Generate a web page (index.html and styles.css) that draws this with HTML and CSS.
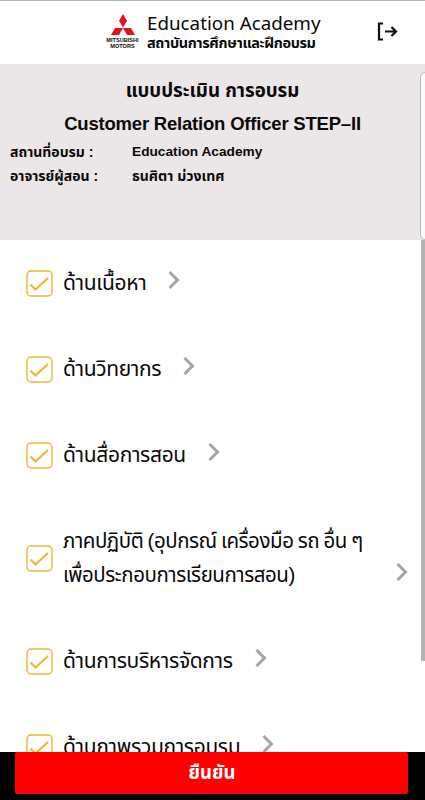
FILE: index.html
```
<!DOCTYPE html>
<html lang="th">
<head>
    <meta charset="UTF-8">
    <meta name="viewport" content="width=device-width, initial-scale=1.0">
    <title>แบบประเมิน การอบรม</title>
    <link rel="stylesheet" href="styles.css">
</head>
<body>
    <header class="topbar">
        <div class="brand">
            <div class="logo">
                <svg class="logo-mark" width="24" height="21" viewBox="0 0 24 21" fill="#e1141e">
                    <path d="M12 0l4 6.8-4 6.8-4-6.8z"/>
                    <path d="M12 14H4l-4 6.900h8z"/>
                    <path d="M12 14h8l4 6.900h-8z"/>
                </svg>
                <span>MITSUBISHI</span>
                <span>MOTORS</span>
            </div>
            <div class="brand-text">
                <div class="brand-en">Education Academy</div>
                <div class="brand-th">สถาบันการศึกษาและฝึกอบรม</div>
            </div>
        </div>
        <svg class="logout" width="21" height="19" viewBox="0 0 21 19" fill="none" stroke="#111" stroke-width="2.2">
            <path d="M6 1.500H2v16h4"/>
            <path d="M8 9.500h11M14.500 5l4.500 4.500-4.500 4.500"/>
        </svg>
    </header>

    <section class="info">
        <h1>แบบประเมิน การอบรม</h1>
        <h2>Customer Relation Officer STEP–II</h2>
        <dl>
            <dt>สถานที่อบรม :</dt>
            <dd class="place">Education Academy</dd>
            <dt>อาจารย์ผู้สอน :</dt>
            <dd>ธนศิตา ม่วงเทศ</dd>
        </dl>
    </section>

    <main class="topics">
        <div class="topic">
            <svg class="check" viewBox="0 0 27 27"><rect x="1" y="1" width="25" height="25" rx="4"/><path d="M4.500 14.500l5 5L22 8"/></svg>
            <span class="label">ด้านเนื้อหา</span>
            <svg class="arrow" viewBox="0 0 12 18"><path d="M1.500 1l8 8-8 8"/></svg>
        </div>
        <div class="topic">
            <svg class="check" viewBox="0 0 27 27"><rect x="1" y="1" width="25" height="25" rx="4"/><path d="M4.500 14.500l5 5L22 8"/></svg>
            <span class="label">ด้านวิทยากร</span>
            <svg class="arrow" viewBox="0 0 12 18"><path d="M1.500 1l8 8-8 8"/></svg>
        </div>
        <div class="topic">
            <svg class="check" viewBox="0 0 27 27"><rect x="1" y="1" width="25" height="25" rx="4"/><path d="M4.500 14.500l5 5L22 8"/></svg>
            <span class="label">ด้านสื่อการสอน</span>
            <svg class="arrow" viewBox="0 0 12 18"><path d="M1.500 1l8 8-8 8"/></svg>
        </div>
        <div class="topic">
            <svg class="check" viewBox="0 0 27 27"><rect x="1" y="1" width="25" height="25" rx="4"/><path d="M4.500 14.500l5 5L22 8"/></svg>
            <span class="label label-long">ภาคปฏิบัติ (อุปกรณ์ เครื่องมือ รถ อื่น ๆ<br>เพื่อประกอบการเรียนการสอน)</span>
            <svg class="arrow" viewBox="0 0 12 18"><path d="M1.500 1l8 8-8 8"/></svg>
        </div>
        <div class="topic">
            <svg class="check" viewBox="0 0 27 27"><rect x="1" y="1" width="25" height="25" rx="4"/><path d="M4.500 14.500l5 5L22 8"/></svg>
            <span class="label">ด้านการบริหารจัดการ</span>
            <svg class="arrow" viewBox="0 0 12 18"><path d="M1.500 1l8 8-8 8"/></svg>
        </div>
        <div class="topic">
            <svg class="check" viewBox="0 0 27 27"><rect x="1" y="1" width="25" height="25" rx="4"/><path d="M4.500 14.500l5 5L22 8"/></svg>
            <span class="label">ด้านภาพรวมการอบรม</span>
            <svg class="arrow" viewBox="0 0 12 18"><path d="M1.500 1l8 8-8 8"/></svg>
        </div>
    </main>

    <footer class="bottom">
        <button type="button" class="confirm">ยืนยัน</button>
    </footer>

    <div class="side-handle"></div>
    <div class="scrollbar"></div>
</body>
</html>
```
FILE: styles.css
```
* {
    box-sizing: border-box;
}
body {
    margin: 0;
    height: 800px;
    display: flex;
    flex-direction: column;
    position: relative;
    overflow: hidden;
    background: #fff;
    color: #0a0a0a;
    font-family: "Liberation Sans", "Noto Sans Thai", "Loma", "Garuda", serif;
}

/* Header */
.topbar {
    height: 64px;
    flex-shrink: 0;
    display: flex;
    align-items: center;
    justify-content: space-between;
    padding: 0 27px 0 106px;
    border-top: 1px solid #b5b5b5;
}
.brand {
    display: flex;
    gap: 8px;
}
.logo {
    width: 33px;
    display: flex;
    flex-direction: column;
    align-items: center;
    padding-top: 1px;
    font-size: 5.6px;
    font-weight: bold;
    line-height: 6px;
}
.logo-mark {
    margin-bottom: 2px;
}
.brand-en {
    font-family: "Noto Sans", sans-serif;
    font-size: 18.8px;
    line-height: 20px;
    white-space: nowrap;
}
.brand-th {
    font-size: 14.5px;
    font-weight: bold;
    letter-spacing: -0.4px;
    line-height: 20px;
    white-space: nowrap;
}
.logout {
    margin-top: -2px;
}

/* Course info */
.info {
    height: 176px;
    flex-shrink: 0;
    padding: 10px 10px 0;
    background: #ebe6e8;
}
.info h1, .info h2 {
    margin: 0;
    font-size: 18.7px;
    font-weight: bold;
    line-height: 33px;
    text-align: center;
    white-space: nowrap;
}
.info h2 {
    font-size: 18.5px;
    letter-spacing: -0.2px;
}
.info dl {
    display: grid;
    grid-template-columns: 122px 1fr;
    margin: 0;
    font-size: 14px;
    font-weight: bold;
    line-height: 24px;
}
.info dd {
    margin: 0;
}
.info .place {
    font-size: 13.7px;
}

/* Topic list */
.topics {
    flex: 1;
    min-height: 0;
    overflow: hidden;
    display: flex;
    flex-direction: column;
    gap: 52px;
    padding: 26px 0 0 26px;
}
.topic {
    display: flex;
    align-items: center;
    flex-shrink: 0;
}
.check {
    width: 27px;
    height: 27px;
    margin-right: 10px;
    fill: none;
    stroke: #e9b92f;
    stroke-width: 1.4;
}
.check path {
    stroke-width: 2.2;
}
.label {
    font-size: 21px;
    letter-spacing: -0.35px;
    line-height: 34px;
    margin-right: 22px;
    white-space: nowrap;
}
.label-long {
    width: 311px;
    font-size: 20.5px;
    letter-spacing: -0.45px;
    word-spacing: -1px;
}
.arrow {
    width: 12px;
    height: 18px;
    align-self: flex-end;
    margin-bottom: 11px;
    fill: none;
    stroke: #a6a6a6;
    stroke-width: 3;
}

/* Confirm button */
.bottom {
    height: 48px;
    flex-shrink: 0;
    padding: 0 17px 6px 15px;
    background: #000;
}
.confirm {
    display: block;
    width: 100%;
    height: 42px;
    padding: 0 0 0 1px;
    border: 0;
    border-radius: 2px;
    background: #fe0000;
    color: #fff;
    font-family: inherit;
    font-size: 18.5px;
    font-weight: bold;
}

/* Overlays on the right edge */
.side-handle {
    position: absolute;
    top: 72px;
    right: -6px;
    width: 11px;
    height: 168px;
    border: 1px solid #b9b7b8;
    border-radius: 6px;
    background: #fafafa;
}
.scrollbar {
    position: absolute;
    top: 240px;
    right: 0;
    width: 4px;
    height: 421px;
    background: #b3b3b3;
}
```
